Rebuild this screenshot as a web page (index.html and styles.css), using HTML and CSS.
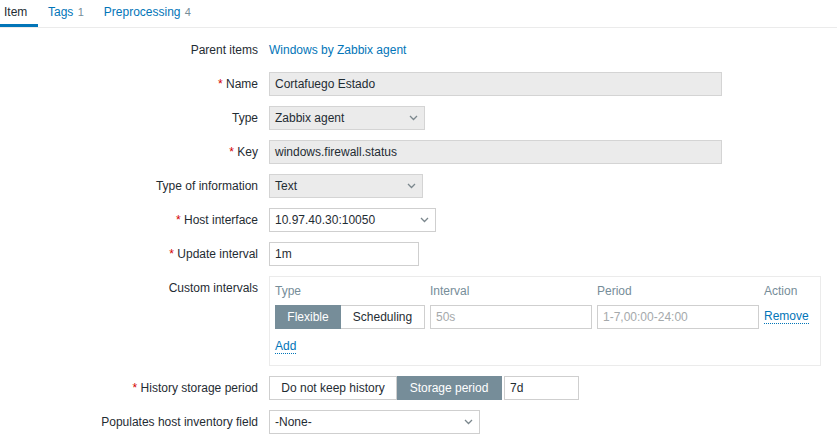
FILE: index.html
```html
<html>
<head>
    <title>Item</title>
    <link rel="stylesheet" href="styles.css">
</head>
<body>
<div class="tabs">
    <span class="tab active">Item</span>
    <a class="tab" href="#">Tags <span class="count">1</span></a>
    <a class="tab" href="#">Preprocessing <span class="count">4</span></a>
</div>

<div class="form-grid">
    <div class="label">Parent items</div>
    <div class="field"><a class="link" href="#">Windows by Zabbix agent</a></div>

    <div class="label"><span class="req">*</span> Name</div>
    <div class="field"><div class="input readonly w-name">Cortafuego Estado</div></div>

    <div class="label">Type</div>
    <div class="field">
        <div class="select readonly w-type">
            <span>Zabbix agent</span>
            <svg width="9" height="6" viewBox="0 0 9 6"><path d="M1 1 L4.5 4.5 L8 1" fill="none" stroke="#7b878d" stroke-width="1.3"/></svg>
        </div>
    </div>

    <div class="label"><span class="req">*</span> Key</div>
    <div class="field"><div class="input readonly w-name">windows.firewall.status</div></div>

    <div class="label">Type of information</div>
    <div class="field">
        <div class="select readonly w-info">
            <span>Text</span>
            <svg width="9" height="6" viewBox="0 0 9 6"><path d="M1 1 L4.5 4.5 L8 1" fill="none" stroke="#7b878d" stroke-width="1.3"/></svg>
        </div>
    </div>

    <div class="label"><span class="req">*</span> Host interface</div>
    <div class="field">
        <div class="select w-host">
            <span>10.97.40.30:10050</span>
            <svg width="9" height="6" viewBox="0 0 9 6"><path d="M1 1 L4.5 4.5 L8 1" fill="none" stroke="#7b878d" stroke-width="1.3"/></svg>
        </div>
    </div>

    <div class="label"><span class="req">*</span> Update interval</div>
    <div class="field"><div class="input w-update">1m</div></div>

    <div class="label label-top">Custom intervals</div>
    <div class="field">
        <div class="intervals">
            <div class="iv-head">Type</div>
            <div class="iv-head">Interval</div>
            <div class="iv-head">Period</div>
            <div class="iv-head">Action</div>

            <div class="radio-group">
                <span class="radio on w-flex">Flexible</span>
                <span class="radio w-sched">Scheduling</span>
            </div>
            <div class="input placeholder">50s</div>
            <div class="input placeholder">1-7,00:00-24:00</div>
            <div class="iv-action"><a class="link dotted" href="#">Remove</a></div>

            <div class="iv-add"><a class="link dotted" href="#">Add</a></div>
        </div>
    </div>

    <div class="label"><span class="req">*</span> History storage period</div>
    <div class="field history">
        <div class="radio-group">
            <span class="radio w-nokeep">Do not keep history</span>
            <span class="radio on w-storage">Storage period</span>
        </div>
        <div class="input w-days">7d</div>
    </div>

    <div class="label">Populates host inventory field</div>
    <div class="field">
        <div class="select w-inv">
            <span>-None-</span>
            <svg width="9" height="6" viewBox="0 0 9 6"><path d="M1 1 L4.5 4.5 L8 1" fill="none" stroke="#7b878d" stroke-width="1.3"/></svg>
        </div>
    </div>
</div>
</body>
</html>
```

FILE: styles.css
```css
body {
    margin: 0;
    background-color: #ffffff;
    font-family: "Liberation Sans", Arial, sans-serif;
    font-size: 12px;
    color: #1f2c33;
}

a {
    text-decoration: none;
}

/* tab strip */
.tabs {
    display: flex;
    height: 27px;
    border-bottom: 1px solid #ebebeb;
}

.tab {
    display: block;
    padding: 0 10px;
    line-height: 24px;
    height: 24px;
    border-bottom: 3px solid transparent;
    color: #0275b8;
}

.tab.active {
    padding-left: 4px;
    width: 24px;
    color: #1f2c33;
    border-bottom-color: #0275b8;
}

.count {
    color: #768d99;
    font-size: 11px;
    margin-left: 1px;
}

/* form */
.form-grid {
    display: grid;
    grid-template-columns: 258px 1fr;
    column-gap: 11px;
    row-gap: 10px;
    padding-top: 10px;
}

.label {
    text-align: right;
    height: 24px;
    line-height: 24px;
    white-space: nowrap;
}

.label-top {
    line-height: 14px;
    padding-top: 5px;
}

.req {
    color: #d40000;
}

.field {
    display: flex;
    align-items: center;
    min-height: 24px;
}

.link {
    color: #0275b8;
}

.link.dotted {
    border-bottom: 1px dotted #0275b8;
    line-height: 13px;
}

.input, .select {
    box-sizing: border-box;
    height: 24px;
    line-height: 22px;
    padding: 0 5px;
    border: 1px solid #cfcfcf;
    background-color: #ffffff;
    white-space: nowrap;
    overflow: hidden;
}

.readonly {
    background-color: #ebebeb;
    border-color: #d4d4d4;
}

.select {
    display: flex;
    align-items: center;
    justify-content: space-between;
    padding-right: 6px;
}

.placeholder {
    color: #a5a9ab;
}

.w-name { width: 453px; }
.w-type { width: 156px; }
.w-info { width: 154px; }
.w-host { width: 167px; }
.w-update { width: 150px; }
.w-inv { width: 211px; }
.w-days { width: 75px; margin-left: 2px; }

/* custom intervals block */
.intervals {
    box-sizing: border-box;
    width: 552px;
    height: 90px;
    border: 1px solid #ebebeb;
    padding: 5px 5px 0 5px;
    display: grid;
    grid-template-columns: 150px 162px 162px 1fr;
    grid-template-rows: 18px 24px 26px;
    column-gap: 5px;
    row-gap: 5px;
}

.iv-head {
    color: #768d99;
    line-height: 18px;
}

.iv-action {
    display: flex;
    align-items: center;
}

.iv-add {
    grid-column: 1 / 5;
    display: flex;
    align-items: center;
}

.radio-group {
    display: flex;
    height: 24px;
}

.radio {
    box-sizing: border-box;
    height: 24px;
    line-height: 22px;
    text-align: center;
    border: 1px solid #cfcfcf;
    background-color: #ffffff;
    white-space: nowrap;
}

.radio + .radio {
    border-left: none;
}

.radio.on {
    background-color: #768d99;
    border-color: #768d99;
    color: #ffffff;
}

.w-flex { width: 66px; }
.w-sched { width: 84px; }
.w-nokeep { width: 128px; }
.w-storage { width: 105px; }
```
